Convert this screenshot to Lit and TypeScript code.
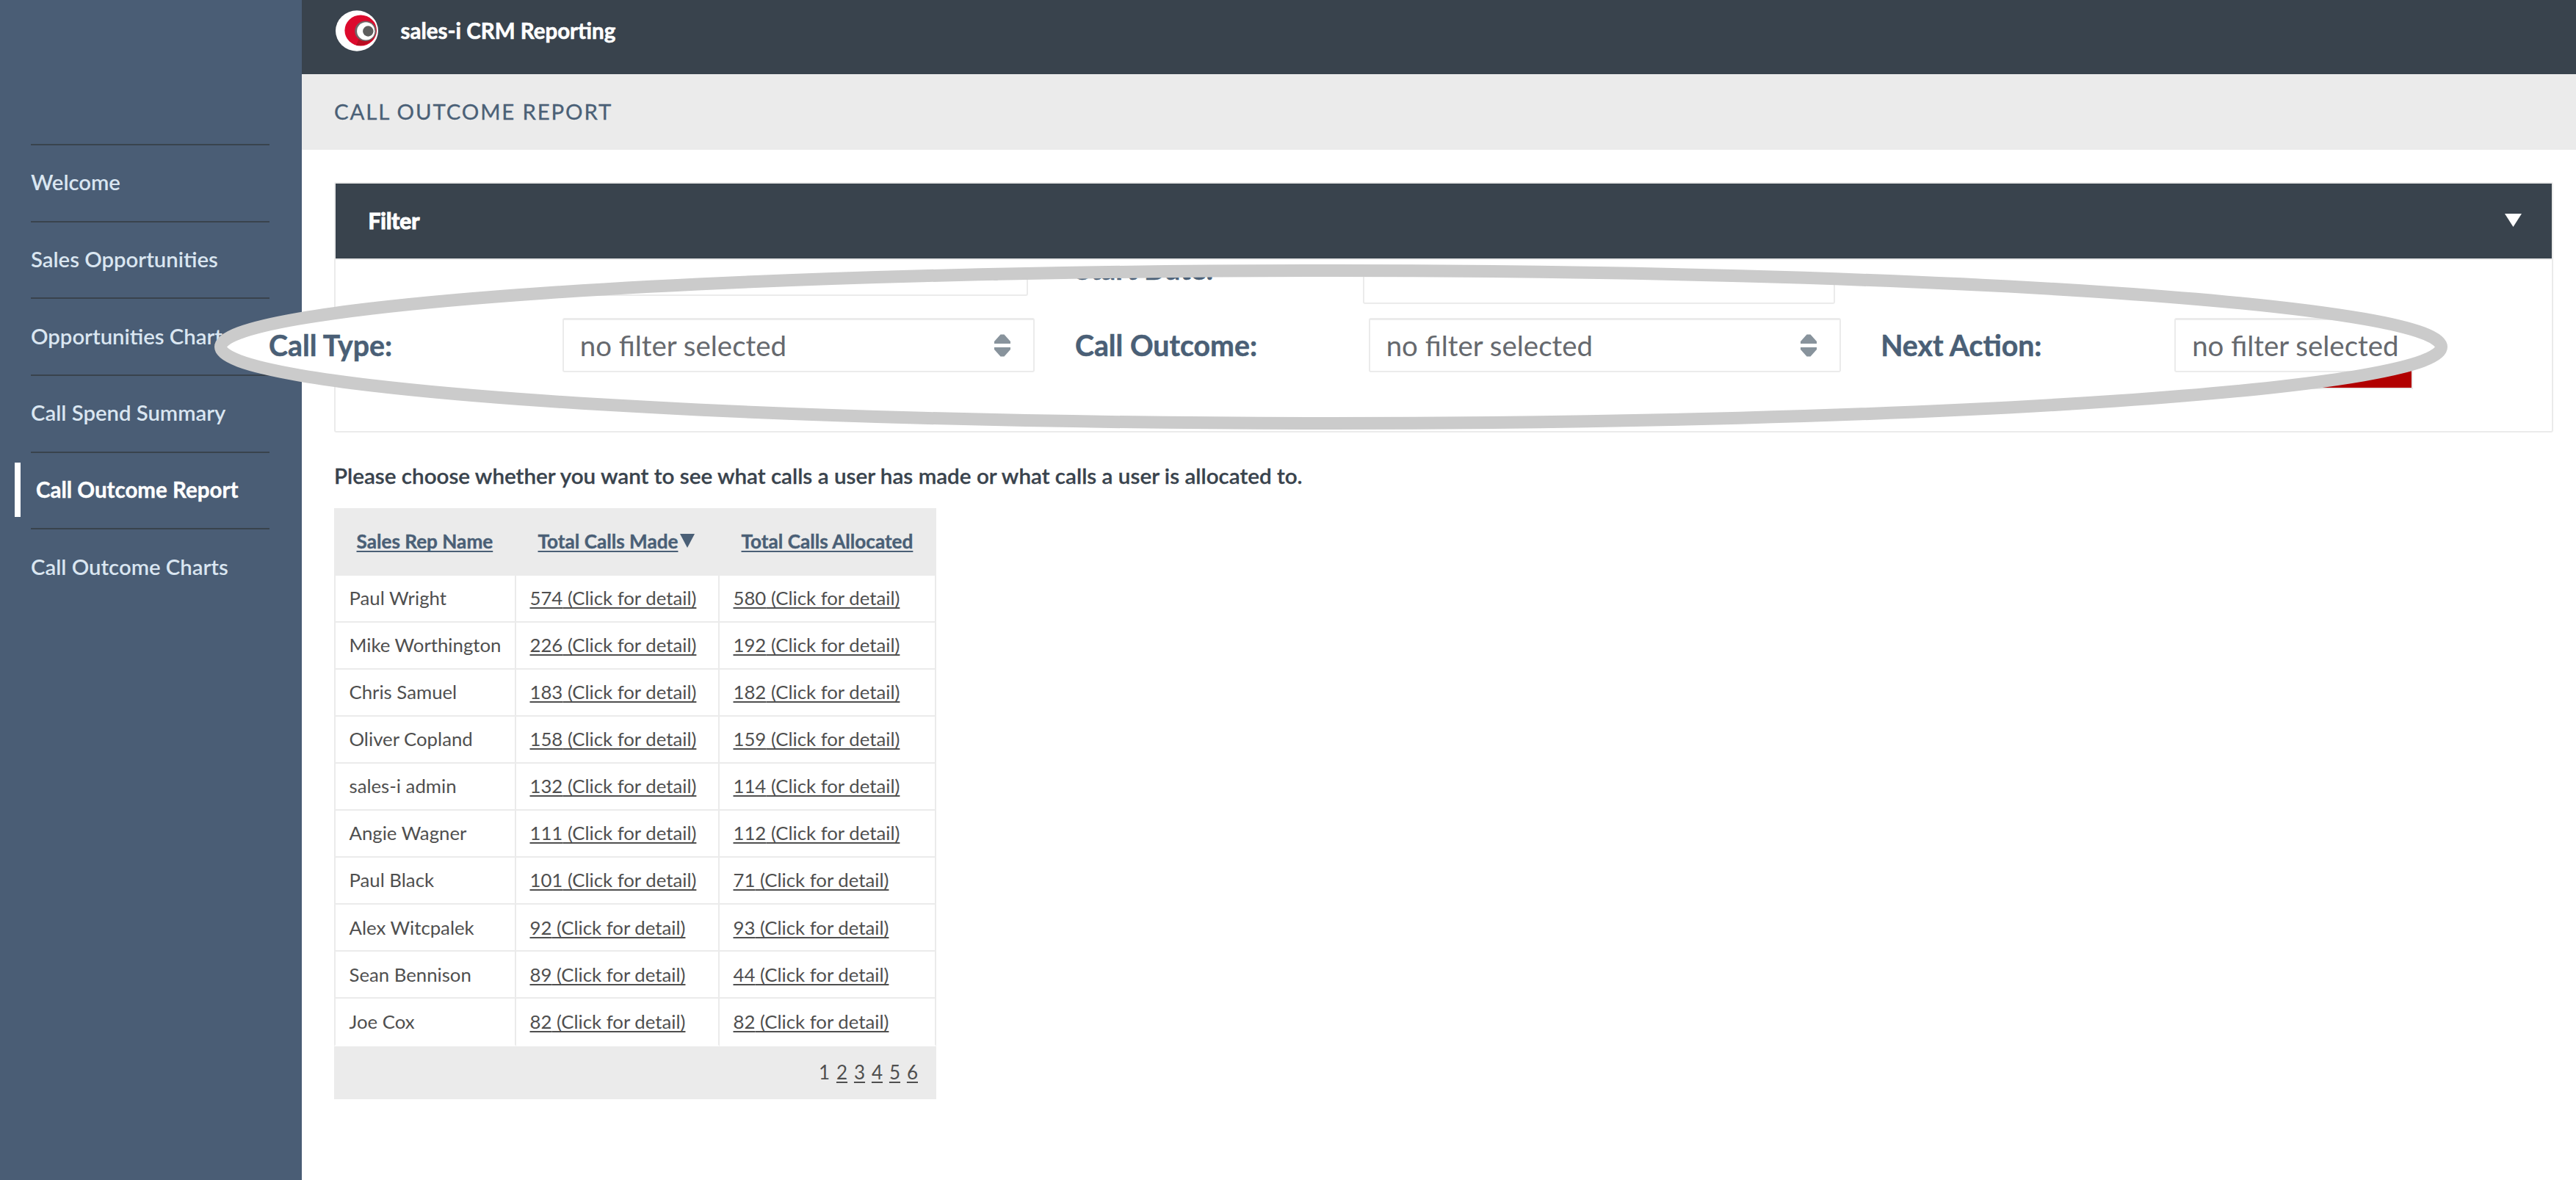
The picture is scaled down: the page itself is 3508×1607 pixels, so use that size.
import { LitElement, html, svg, css } from "lit";

const NAV = [
  "Welcome",
  "Sales Opportunities",
  "Opportunities Charts",
  "Call Spend Summary",
  "Call Outcome Report",
  "Call Outcome Charts",
];
const ACTIVE = "Call Outcome Report";

const REPS: [string, number, number][] = [
  ["Paul Wright", 574, 580],
  ["Mike Worthington", 226, 192],
  ["Chris Samuel", 183, 182],
  ["Oliver Copland", 158, 159],
  ["sales-i admin", 132, 114],
  ["Angie Wagner", 111, 112],
  ["Paul Black", 101, 71],
  ["Alex Witcpalek", 92, 93],
  ["Sean Bennison", 89, 44],
  ["Joe Cox", 82, 82],
];

class CrmSidebar extends LitElement {
  static styles = css`
    :host {
      display: block;
      box-sizing: border-box;
      width: 411px;
      padding: 196px 44px 0 42px;
      background: #4a5d75;
    }
    .item {
      position: relative;
      box-sizing: border-box;
      height: 104.7px;
      border-top: 2px solid #39434d;
      padding-bottom: 3px;
      display: flex;
      align-items: center;
      font-size: 29.3px;
      font-weight: 600;
      color: #dae6f1;
      white-space: nowrap;
    }
    .active {
      padding-left: 7px;
      font-size: 29.5px;
      font-weight: 700;
      color: #fff;
      -webkit-text-stroke: 0.4px #fff;
    }
    .active::before {
      content: "";
      position: absolute;
      left: -22px;
      top: 13px;
      width: 8px;
      height: 74px;
      background: #fff;
    }
  `;
  render() {
    return NAV.map(
      (n) => html`<div class="item ${n === ACTIVE ? "active" : ""}">${n}</div>`
    );
  }
}
customElements.define("crm-sidebar", CrmSidebar);

class CallTable extends LitElement {
  static styles = css`
    :host {
      display: block;
      width: 820px;
      font-size: 25.75px;
      color: #4f4f4f;
    }
    .row {
      display: grid;
      grid-template-columns: 248px 277px 295px;
    }
    .head {
      height: 91.6px;
      background: #ebebeb;
      color: #4a5f76;
      font-weight: 700;
      font-size: 26.15px;
      -webkit-text-stroke: 0.4px #4a5f76;
    }
    .h {
      display: flex;
      align-items: center;
      white-space: nowrap;
      padding: 0 0 2px 29.5px;
    }
    .h:first-child {
      padding-left: 30.5px;
    }
    .u {
      text-decoration: underline;
      text-decoration-thickness: 1.5px;
      text-underline-offset: 2.5px;
      text-decoration-skip-ink: none;
    }
    .sort {
      width: 20px;
      height: 19px;
      margin-left: 3px;
      fill: #4a5f76;
    }
    .body {
      height: 64.1px;
    }
    .c {
      box-sizing: border-box;
      display: flex;
      align-items: center;
      padding: 0 0 1.5px 18.5px;
      border-right: 2px solid #ebebeb;
      border-bottom: 2px solid #ebebeb;
      white-space: nowrap;
    }
    .c:first-child {
      border-left: 2px solid #ebebeb;
    }
    .last .c {
      border-bottom-color: #fff;
    }
    .foot {
      height: 72.5px;
      background: #ebebeb;
      display: flex;
      justify-content: flex-end;
      align-items: center;
      gap: 8.9px;
      padding: 0 25px 2px 0;
      box-sizing: border-box;
      font-size: 26px;
    }
  `;
  render() {
    return html`
      <div class="row head">
        <div class="h"><span class="u">Sales Rep Name</span></div>
        <div class="h">
          <span class="u">Total Calls Made</span>
          <svg class="sort" viewBox="0 0 20 19"><path d="M0 0H20L10 19Z" /></svg>
        </div>
        <div class="h"><span class="u">Total Calls Allocated</span></div>
      </div>
      ${REPS.map(
        ([name, made, alloc], i) => html`<div
          class="row body ${i === REPS.length - 1 ? "last" : ""}"
        >
          <div class="c">${name}</div>
          <div class="c"><span class="u">${made} (Click for detail)</span></div>
          <div class="c"><span class="u">${alloc} (Click for detail)</span></div>
        </div>`
      )}
      <div class="foot">
        <span>1</span>${[2, 3, 4, 5, 6].map((p) => html`<span class="u">${p}</span>`)}
      </div>
    `;
  }
}
customElements.define("call-table", CallTable);

const arrows = svg`<path d="M0 14V11L8.500 1.500H13.500L22 11V14Z" /><path d="M0 19V22L8.500 31.500H13.500L22 22V19Z" />`;

class FilterLens extends LitElement {
  static styles = css`
    :host {
      display: block;
      position: absolute;
      left: 292px;
      top: 360px;
      width: 3041px;
      height: 225px;
    }
    .lens {
      height: 225px;
      overflow: hidden;
      background: #fff;
      clip-path: ellipse(1514px 106px at 50% 50%);
    }
    .row {
      display: grid;
      align-items: center;
      padding-left: 74px;
    }
    .first {
      grid-template-columns: 399px 635px 64px 391.6px 643px;
      height: 96px;
      margin-top: -42px;
    }
    .second {
      grid-template-columns: 399.7px 643.3px 55px 399.7px 643.5px 54px 400px 643px;
      height: 74px;
      margin-top: 19px;
    }
    .label {
      font-size: 39.25px;
      font-weight: 700;
      color: #4a5f76;
      white-space: nowrap;
      padding-bottom: 2px;
      -webkit-text-stroke: 0.5px #4a5f76;
    }
    .box {
      box-sizing: border-box;
      height: 74px;
      border: 2.5px solid #ebebeb;
      border-top-width: 3px;
      border-radius: 3px;
      display: flex;
      align-items: center;
      justify-content: space-between;
      padding: 0 31px 0 22px;
      font-size: 38.45px;
      color: #66696e;
      white-space: nowrap;
    }
    .value {
      padding-bottom: 2px;
    }
    .tall {
      height: 96px;
    }
    .arrows {
      width: 22px;
      height: 33px;
      fill: #88939c;
    }
    .ring {
      position: absolute;
      inset: 0;
      width: 3041px;
      height: 225px;
      fill: none;
      stroke: #cbcbcb;
      stroke-width: 17;
    }
  `;
  select() {
    return html`<div class="box">
      <span class="value">no filter selected</span>
      <svg class="arrows" viewBox="0 0 22 33">${arrows}</svg>
    </div>`;
  }
  render() {
    return html`
      <div class="lens">
        <div class="row first">
          <span></span>
          <div class="box"><span></span><svg class="arrows" viewBox="0 0 22 33">${arrows}</svg></div>
          <span></span>
          <span class="label">Start Date:</span>
          <div class="box tall"></div>
        </div>
        <div class="row second">
          <span class="label">Call Type:</span>
          ${this.select()}
          <span></span>
          <span class="label">Call Outcome:</span>
          ${this.select()}
          <span></span>
          <span class="label">Next Action:</span>
          ${this.select()}
        </div>
      </div>
      <svg class="ring" viewBox="0 0 3041 225">
        <ellipse cx="1520.5" cy="112.5" rx="1512" ry="104" />
      </svg>
    `;
  }
}
customElements.define("filter-lens", FilterLens);

class AppRoot extends LitElement {
  static styles = css`
    :host {
      display: block;
      font-family: Lato, Carlito, sans-serif;
    }
    .page {
      position: relative;
      display: flex;
      width: 3508px;
      height: 1607px;
      overflow: hidden;
      background: #fff;
    }
    .main {
      flex: 1;
      display: flex;
      flex-direction: column;
    }
    .top {
      box-sizing: border-box;
      height: 101px;
      padding: 0 0 17px 46px;
      display: flex;
      align-items: center;
      gap: 30.5px;
      background: #39434d;
      color: #fff;
      font-size: 29.5px;
      font-weight: 700;
      -webkit-text-stroke: 0.6px #fff;
    }
    .logo {
      width: 58px;
      height: 56px;
      -webkit-text-stroke: 0;
    }
    .brand {
      padding-bottom: 2px;
    }
    .crumb {
      box-sizing: border-box;
      height: 103px;
      display: flex;
      align-items: center;
      padding: 0 0 2px 44px;
      background: #ebebeb;
      color: #4a6076;
      font-size: 29.4px;
      letter-spacing: 1.85px;
      -webkit-text-stroke: 0.3px #4a6076;
    }
    .content {
      padding: 44px 31px 0 44px;
    }
    .panel {
      box-sizing: border-box;
      height: 341px;
      border: 2px solid #ebebeb;
      border-radius: 3px;
    }
    .bar {
      box-sizing: border-box;
      height: 104px;
      border-bottom: 2px solid #ebebeb;
      background: #39434d;
      background-clip: padding-box;
      display: flex;
      align-items: center;
      justify-content: space-between;
      padding: 0 41px 2px 44.5px;
      color: #fff;
      font-size: 29.8px;
      font-weight: 700;
      -webkit-text-stroke: 1.2px #fff;
    }
    .caret {
      width: 23px;
      height: 18px;
      fill: #fff;
      margin-bottom: 1px;
    }
    .actions {
      display: flex;
      justify-content: flex-end;
      padding: 108px 189px 0 0;
    }
    .go {
      width: 160px;
      height: 66px;
      background: #b10000;
      border-right: 2px solid #ebebeb;
      border-bottom: 2px solid #ebebeb;
    }
    .hint {
      height: 44px;
      margin: 36px 0 23px;
      display: flex;
      align-items: center;
      color: #39434d;
      font-size: 29.62px;
      font-weight: 600;
      -webkit-text-stroke: 0.3px #39434d;
    }
  `;
  render() {
    return html`
      <div class="page">
        <crm-sidebar></crm-sidebar>
        <div class="main">
          <div class="top">
            <svg class="logo" viewBox="0 0 58 56">
              <ellipse cx="29" cy="28" rx="29" ry="27.7" fill="#fff" />
              <ellipse cx="34.2" cy="27.5" rx="21.8" ry="21" fill="#dc0a2d" />
              <path d="M28 48C42 49 54 41 55.500 28L50 34C46 41 38 42 32 38Z" fill="#b80c20" />
              <ellipse cx="40.700" cy="28.200" rx="14.500" ry="13.800" fill="#6f6668" />
              <ellipse cx="41.300" cy="28.400" rx="12.200" ry="12.200" fill="#fff" />
              <ellipse cx="44.300" cy="28.500" rx="7.200" ry="7.200" fill="#5d5d5d" />
            </svg>
            <span class="brand">sales-i CRM Reporting</span>
          </div>
          <div class="crumb">CALL OUTCOME REPORT</div>
          <div class="content">
            <div class="panel">
              <div class="bar">
                <span>Filter</span>
                <svg class="caret" viewBox="0 0 23 18"><path d="M0 0H23L11.500 18Z" /></svg>
              </div>
              <div class="actions"><div class="go"></div></div>
            </div>
            <div class="hint">
              Please choose whether you want to see what calls a user has made or what calls a user
              is allocated to.
            </div>
            <call-table></call-table>
          </div>
        </div>
        <filter-lens></filter-lens>
      </div>
    `;
  }
}
customElements.define("app-root", AppRoot);
